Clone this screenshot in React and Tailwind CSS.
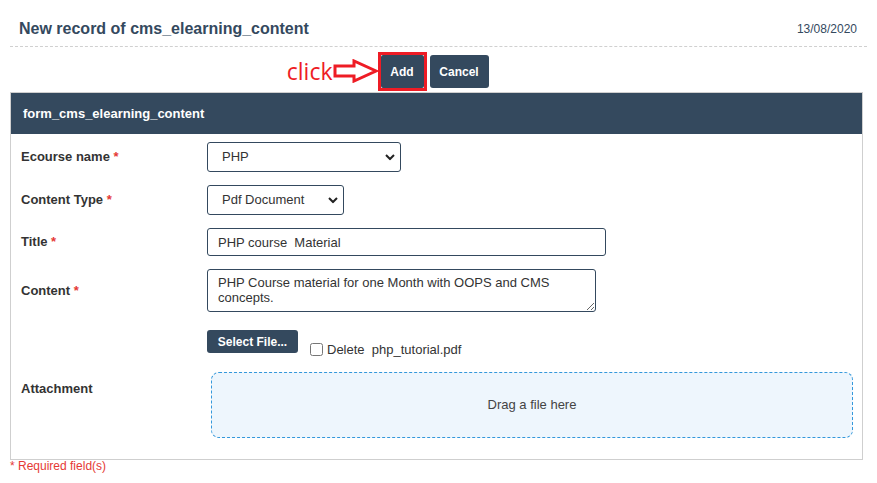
import React from "react";

const Chevron = () => (
  <svg
    className="pointer-events-none absolute right-[6px] top-1/2 -translate-y-1/2"
    width="10"
    height="7"
    viewBox="0 0 10 7"
  >
    <path d="M1 1.5 L5 5.5 L9 1.5" fill="none" stroke="#222" strokeWidth="2" />
  </svg>
);

const Label = ({ text, required, className = "" }) => (
  <div className={"w-[186px] shrink-0 text-[13px] font-bold text-[#333] " + className}>
    {text}
    {required && <span className="text-[#e53935]"> *</span>}
  </div>
);

const ClickArrow = () => (
  <div className="absolute right-[100%] top-[3px] flex items-center pr-[2px]">
    <span className="text-[23px] leading-[26px] text-[#ee1c25] font-['Open_Sans',sans-serif]">click</span>
    <svg width="46" height="24" viewBox="0 0 46 24">
      <path
        d="M2 7 H21 V2 L43 12 L21 22 V17 H2 Z"
        fill="#fff"
        stroke="#ee1c25"
        strokeWidth="3"
        strokeLinejoin="miter"
      />
    </svg>
  </div>
);

export default function App() {
  return (
    <div className="w-[877px] h-[483px] bg-white font-['Liberation_Sans',Arial,sans-serif] text-[#333]">
      {/* header */}
      <div className="mx-[10px] pt-[19px] pb-[7px] pl-[9px] pr-[10px] flex justify-between items-center border-b border-dashed border-[#d0d0d0]">
        <h1 className="text-[16px] font-bold text-[#34495e] leading-[20px]">
          New record of cms_elearning_content
        </h1>
        <span className="text-[12px] text-[#34495e]">13/08/2020</span>
      </div>

      {/* actions */}
      <div className="mx-[10px] mt-[5px] flex justify-center items-center gap-[3px] pr-[11px]">
        <div className="relative border-[3px] border-[#ee1c25]">
          <ClickArrow />
          <button className="w-[43px] h-[33px] bg-[#34495e] text-white text-[12px] font-bold rounded-[2px]">
            Add
          </button>
        </div>
        <button className="w-[59px] h-[33px] bg-[#34495e] text-white text-[12px] font-bold rounded-[3px]">
          Cancel
        </button>
      </div>

      {/* form panel */}
      <div className="mx-[10px] mt-[1px] w-[853px] border border-[#cfcfcf]">
        <div className="h-[41px] bg-[#34495e] flex items-center pl-[12px] text-white text-[13px] font-bold">
          form_cms_elearning_content
        </div>
        <div className="pl-[10px] pr-[9px] pt-[8px] pb-[21px] flex flex-col">
          <div className="flex items-center">
            <Label text="Ecourse name" required />
            <div className="relative w-[194px] h-[30px]">
              <select className="appearance-none w-full h-full border border-[#34495e] rounded-[3px] pl-[14px] text-[13px] text-[#333] bg-white">
                <option>PHP</option>
              </select>
              <Chevron />
            </div>
          </div>
          <div className="flex items-center mt-[13px]">
            <Label text="Content Type" required />
            <div className="relative w-[137px] h-[30px]">
              <select className="appearance-none w-full h-full border border-[#34495e] rounded-[3px] pl-[14px] text-[13px] text-[#333] bg-white">
                <option>Pdf Document</option>
              </select>
              <Chevron />
            </div>
          </div>
          <div className="flex items-center mt-[13px]">
            <Label text="Title" required />
            <input
              className="w-[399px] h-[28px] border border-[#34495e] rounded-[3px] pl-[10px] text-[13px] text-[#333] outline-none"
              defaultValue="PHP course  Material"
            />
          </div>
          <div className="flex items-center mt-[13px]">
            <Label text="Content" required />
            <textarea
              className="w-[389px] h-[43px] border border-[#34495e] rounded-[3px] px-[10px] pt-[5px] text-[13px] leading-[15px] text-[#333] outline-none"
              defaultValue="PHP Course material for one Month with OOPS and CMS concepts."
              spellCheck={false}
            />
          </div>
          <div className="flex items-center mt-[18px]">
            <Label text="Attachment" className="mt-[10px]" />
            <div className="flex flex-col flex-1">
              <div className="flex items-end">
                <button className="w-[91px] h-[23px] bg-[#34495e] text-white text-[12px] font-bold rounded-[3px]">
                  Select File...
                </button>
                <label className="flex items-center ml-[12px] text-[13px] text-[#333] -mb-[6px]">
                  <input type="checkbox" className="w-[13px] h-[13px] m-0 mr-[4px]" />
                  <span className="whitespace-pre">Delete  php_tutorial.pdf</span>
                </label>
              </div>
              <div className="mt-[19px] ml-[4px] h-[66px] border border-dashed border-[#3498db] rounded-[8px] bg-[#eef6fd] flex items-center justify-center text-[13px] text-[#444]">
                Drag a file here
              </div>
            </div>
          </div>
        </div>
      </div>
      <div className="ml-[10px] -mt-[1px] text-[12px] leading-[14px] text-[#e53935]">* Required field(s)</div>
    </div>
  );
}
